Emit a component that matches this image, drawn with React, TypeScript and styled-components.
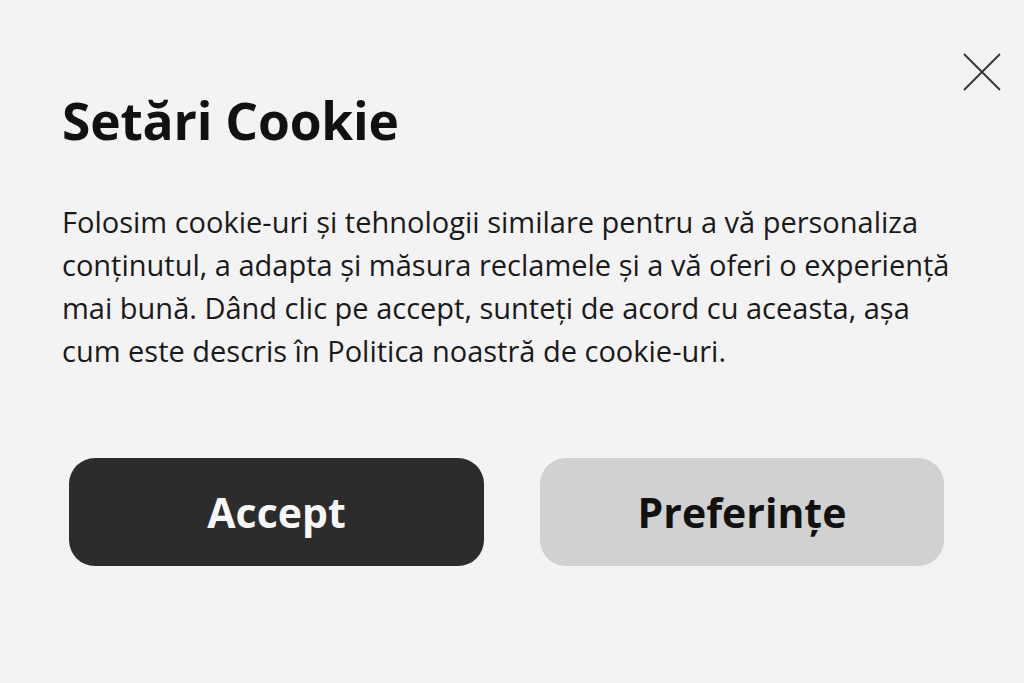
import React from 'react';
import styled, { createGlobalStyle } from 'styled-components';

const GlobalStyle = createGlobalStyle`
  html, body {
    margin: 0;
    padding: 0;
    background: #f3f3f3;
  }
  body {
    font-family: "Open Sans", "Noto Sans", sans-serif;
    color: #151515;
  }
`;

const Page = styled.div`
  position: relative;
  width: 1024px;
  height: 683px;
  box-sizing: border-box;
  padding: 85px 0 0 62px;
  background: #f3f3f3;
  overflow: hidden;
`;

const CloseButton = styled.button`
  position: absolute;
  top: 52px;
  right: 22px;
  width: 40px;
  height: 40px;
  padding: 0;
  border: none;
  background: transparent;
  cursor: pointer;
  display: flex;
  align-items: center;
  justify-content: center;
`;

const Title = styled.h1`
  margin: 0;
  font-size: 51.5px;
  line-height: 70px;
  font-weight: 700;
  color: #111;
  letter-spacing: -0.2px;
`;

const Body = styled.p`
  margin: 45px 0 0;
  width: 895px;
  font-size: 29px;
  line-height: 43px;
  font-weight: 400;
  color: #1a1a1a;
`;

const ButtonRow = styled.div`
  display: flex;
  gap: 56px;
  margin: 86px 0 0 7px;
`;

const ActionButton = styled.button<{ $variant: 'primary' | 'secondary'; $width: number }>`
  width: ${({ $width }) => $width}px;
  height: 108px;
  border: none;
  border-radius: 26px;
  font-family: "Open Sans", "Noto Sans", sans-serif;
  font-size: 41px;
  font-weight: 700;
  cursor: pointer;
  background: ${({ $variant }) => ($variant === 'primary' ? '#2c2c2c' : '#d1d1d1')};
  color: ${({ $variant }) => ($variant === 'primary' ? '#f7f7f7' : '#111')};
`;

const App: React.FC = () => (
  <>
    <GlobalStyle />
    <Page>
      <CloseButton aria-label="Închide">
        <svg width="40" height="40" viewBox="0 0 40 40">
          <path d="M2 2 L38 38 M38 2 L2 38" stroke="#333" strokeWidth="1.8" fill="none" />
        </svg>
      </CloseButton>
      <Title>Setări Cookie</Title>
      <Body>
        Folosim cookie-uri și tehnologii similare pentru a vă personaliza conținutul, a adapta și
        măsura reclamele și a vă oferi o experiență mai bună. Dând clic pe accept, sunteți de acord
        cu aceasta, așa cum este descris în Politica noastră de cookie-uri.
      </Body>
      <ButtonRow>
        <ActionButton $variant="primary" $width={415}>Accept</ActionButton>
        <ActionButton $variant="secondary" $width={404}>Preferințe</ActionButton>
      </ButtonRow>
    </Page>
  </>
);

export default App;
